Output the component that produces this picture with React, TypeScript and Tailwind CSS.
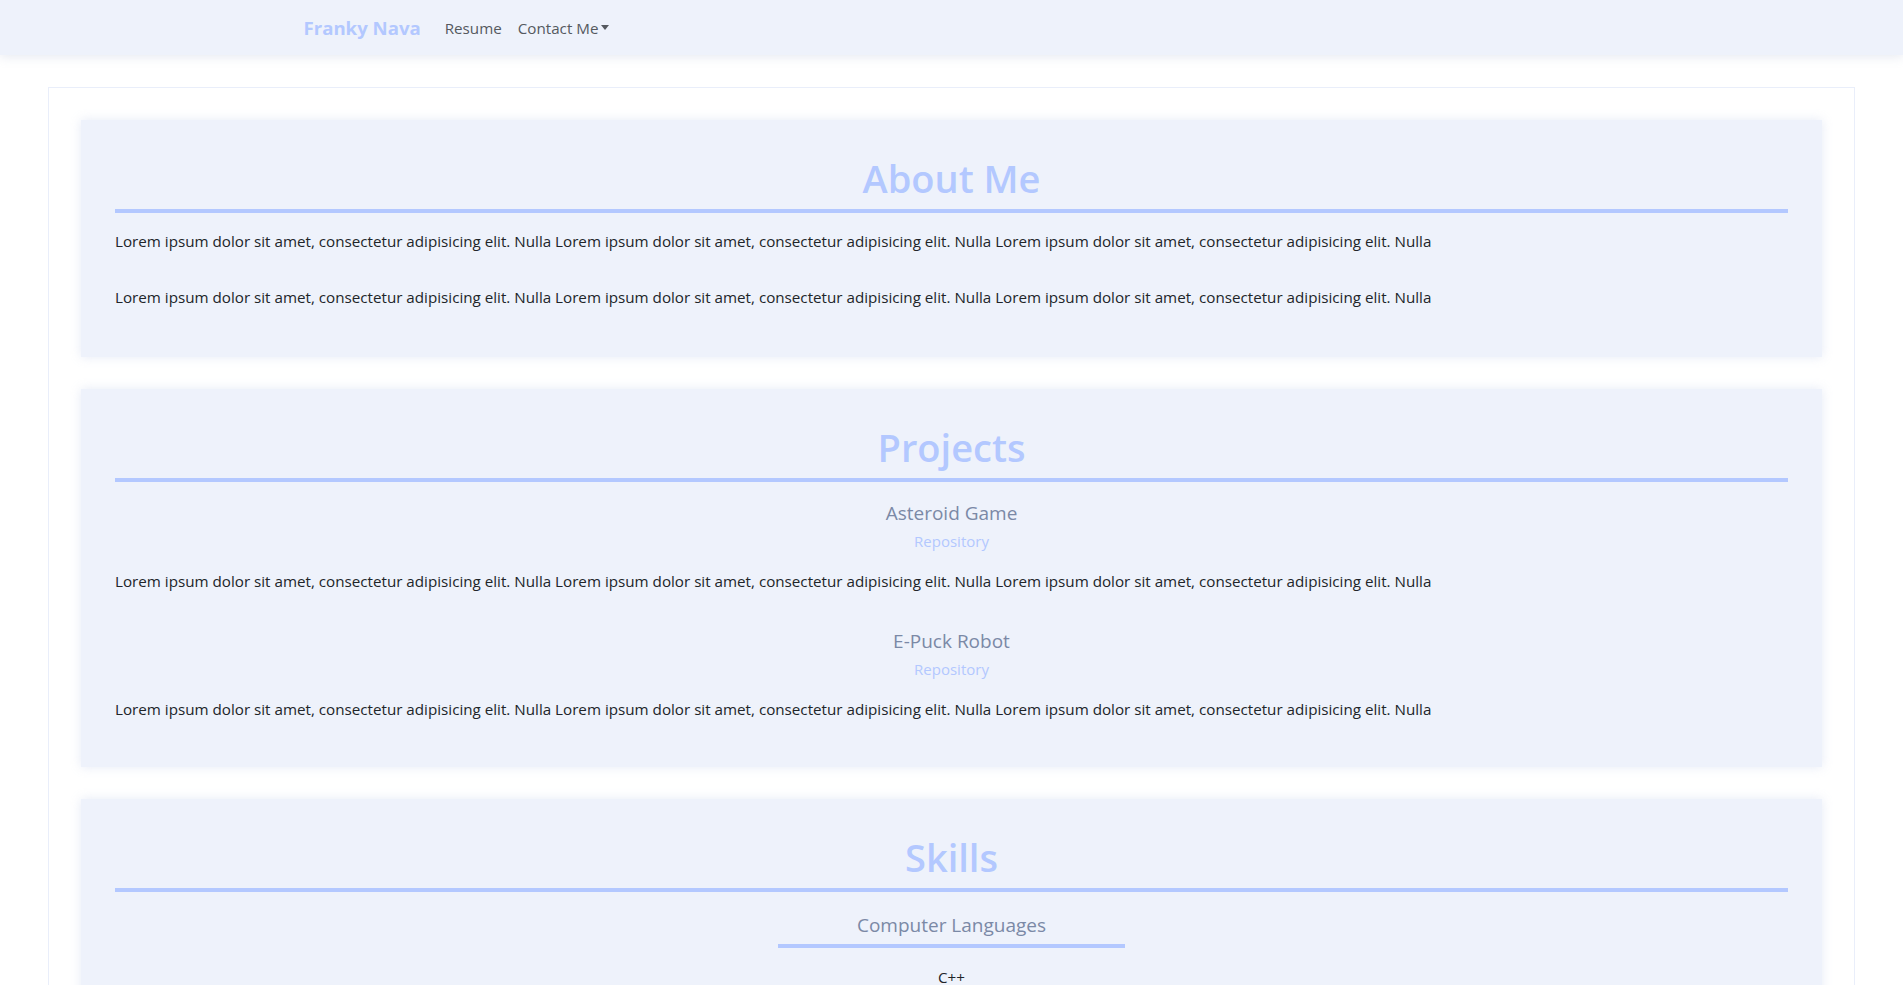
import React from 'react';

const LOREM =
  'Lorem ipsum dolor sit amet, consectetur adipisicing elit. Nulla Lorem ipsum dolor sit amet, consectetur adipisicing elit. Nulla Lorem ipsum dolor sit amet, consectetur adipisicing elit. Nulla';

const projects = [
  { name: 'Asteroid Game', text: LOREM },
  { name: 'E-Puck Robot', text: LOREM },
];

const SectionCard: React.FC<{ title: string; children: React.ReactNode }> = ({ title, children }) => (
  <section className="bg-[#eef2fb] shadow-[0_0_10px_rgba(170,185,225,0.3)] px-[34px] pt-[34px] pb-[33px]">
    <h1 className="text-[38px] leading-[48px] font-semibold text-center text-[#b3c8ff]">{title}</h1>
    <div className="h-1 mt-[7px] mb-[1px] bg-[#b3c8ff]" />
    {children}
  </section>
);

export default function App() {
  return (
    <div className="min-h-screen bg-white text-[15.2px] leading-6 text-[#212529] font-['Open_Sans',sans-serif]">
      <nav className="h-[55px] bg-[#eef2fb] shadow-[0_2px_10px_rgba(160,170,200,0.25)] relative z-10">
        <div className="max-w-[1320px] mx-auto px-3 h-full flex items-center">
          <a className="text-[18.6px] leading-[30px] font-bold text-[#b3c8ff] mr-4">Franky Nava</a>
          <ul className="flex items-center">
            <li>
              <a className="block px-2 text-[#55595f]">Resume</a>
            </li>
            <li>
              <a className="flex items-center px-2 text-[#55595f]">
                Contact Me
                <span className="inline-block ml-[3px] w-0 h-0 border-t-[5px] border-t-[#55595f] border-x-[4px] border-x-transparent" />
              </a>
            </li>
          </ul>
        </div>
      </nav>

      <main className="mx-12 mt-8 border border-[#e9eefa] p-8 flex flex-col gap-8">
        <SectionCard title="About Me">
          <p className="mt-4">{LOREM}</p>
          <p className="mt-8 mb-[15px]">{LOREM}</p>
        </SectionCard>

        <SectionCard title="Projects">
          <div className="pt-[18px]">
            {projects.map((p, i) => (
              <div key={p.name} className={i > 0 ? 'mt-[36px]' : ''}>
                <h5 className="text-[19px] leading-6 text-center text-[#7b89a6]">{p.name}</h5>
                <a className="block mt-1 text-center text-[15px] leading-6 text-[#b3c8ff]">Repository</a>
                <p className="mt-4">{p.text}</p>
              </div>
            ))}
          </div>
          <div className="h-[13px]" />
        </SectionCard>

        <SectionCard title="Skills">
          <div className="flex flex-col items-center pt-[20px]">
            <h5 className="text-[19px] leading-6 text-[#7b89a6]">Computer Languages</h5>
            <div className="h-1 w-[347px] mt-[7px] bg-[#b3c8ff]" />
            <ul className="mt-[17px] text-center">
              <li>C++</li>
              <li>Python</li>
              <li>Java</li>
              <li>JavaScript</li>
            </ul>
          </div>
        </SectionCard>
      </main>
    </div>
  );
}
